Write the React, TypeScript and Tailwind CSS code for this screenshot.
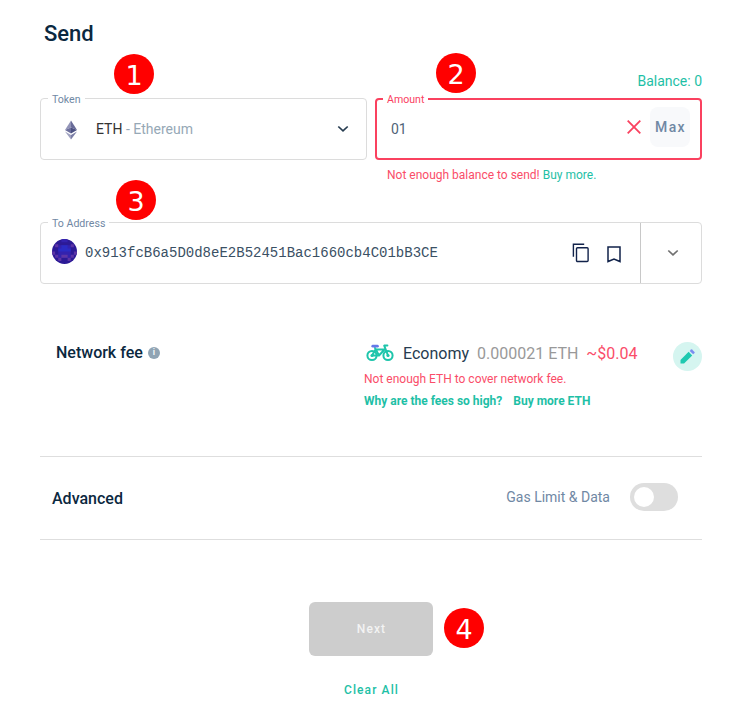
import React from "react";

function StepBadge({ n, className }: { n: number; className: string }) {
  return (
    <span
      className={`absolute flex h-10 w-10 items-center justify-center rounded-full bg-[#ff0000] pt-[3px] font-['DejaVu_Sans',sans-serif] text-[27px] leading-none text-white ${className}`}
    >
      {n}
    </span>
  );
}

function FieldLabel({ children, className = "text-[#7088a4]" }: { children: React.ReactNode; className?: string }) {
  return (
    <span className={`absolute left-[7px] -top-1.5 bg-white px-1 text-[10.6px] leading-[14px] whitespace-nowrap ${className}`}>
      {children}
    </span>
  );
}

function EthLogo() {
  return (
    <svg width="14" height="20" viewBox="0 0 14 20" className="mt-px shrink-0">
      <path d="M7 .5 1 10l6-2.6z" fill="#9294b8" />
      <path d="M7 .5 13 10 7 7.4z" fill="#686b98" />
      <path d="M1 10l6-2.6v6.2z" fill="#6c6f9c" />
      <path d="M13 10 7 7.4v6.2z" fill="#4c5182" />
      <path d="M1 11.6l6 3.5v4.4z" fill="#9fa1c0" />
      <path d="M13 11.6l-6 3.5v4.4z" fill="#7b7ea6" />
    </svg>
  );
}

function Identicon() {
  return (
    <svg width="25" height="25" viewBox="0 0 24 24" className="shrink-0">
      <defs>
        <clipPath id="avatar">
          <circle cx="12" cy="12" r="12" />
        </clipPath>
      </defs>
      <g clipPath="url(#avatar)">
        <path fill="#2c1a96" d="M0 0h24v24H0z" />
        <path fill="#3322ae" d="M9 0h6v3H9zM6 6h12v12H6z" />
        <path fill="#2b2bc4" d="M9 6h6v6H9zM6 9h12v3H6z" />
        <path
          fill="#5d35a6"
          d="M3 5h3v3H3zM18 5h3v3h-3zM0 12h3v3H0zM21 12h3v3h-3zM3 15h3v3H3zM18 15h3v3h-3zM9 15h6v3H9zM6 18h3v3H6zM15 18h3v3h-3z"
        />
      </g>
    </svg>
  );
}

function BikeIcon() {
  return (
    <svg width="28" height="18" viewBox="0 0 28 18" fill="none" className="shrink-0">
      <g stroke="#1ec5ab" strokeWidth="2" strokeLinecap="round" strokeLinejoin="round">
        <circle cx="6" cy="11.5" r="4.6" />
        <circle cx="22" cy="11.5" r="4.6" />
        <path d="M6 11.5 9.5 5.5h9M9 4l4 7.5H6M13 11.5l5.5-6M22 11.5 18.2 1.6h3.2" />
      </g>
      <circle cx="6" cy="11.5" r="1.6" fill="#1ec5ab" />
      <circle cx="22" cy="11.5" r="1.6" fill="#1ec5ab" />
      <path d="M6.8 2.2h4.6" stroke="#6578e8" strokeWidth="2.8" strokeLinecap="round" />
    </svg>
  );
}

function Chevron({ color }: { color: string }) {
  return (
    <svg width="12" height="8" viewBox="0 0 12 8" fill="none" className="shrink-0">
      <path d="m1.3 1.5 4.7 4.4 4.7-4.4" stroke={color} strokeWidth="1.7" />
    </svg>
  );
}

export default function App() {
  return (
    <main className="relative h-[719px] w-[730px] overflow-hidden bg-white pr-7 pl-10 font-['Roboto',sans-serif] text-[#0b2840]">
      <header className="flex h-[98px] justify-between">
        <h1 className="pt-5 pl-1 text-[22px] leading-7 font-medium">Send</h1>
        <span className="pt-[71px] text-[14px] leading-5 text-[#1ec0a6]">Balance: 0</span>
      </header>

      <section className="flex h-[124px] items-start gap-2">
        <div className="relative flex h-[62px] w-[327px] items-center rounded border border-[#dcdcdc] pr-[17px] pl-[23px]">
          <FieldLabel>Token</FieldLabel>
          <EthLogo />
          <span className="mt-px ml-[18px] flex-1 text-[14px] text-[#96a8b6]">
            <span className="text-[#333]">ETH</span> - Ethereum
          </span>
          <Chevron color="#263c50" />
        </div>
        <div className="w-[327px]">
          <div className="relative flex h-[62px] items-center rounded border-2 border-[#fa415f] pr-[10px] pl-[14px]">
            <FieldLabel className="-mt-px -ml-px text-[#fa415f]">Amount</FieldLabel>
            <span className="flex-1 text-[14px] text-[#506477]">01</span>
            <svg width="14" height="14" viewBox="0 0 14 14" className="mr-[9px] -mt-1">
              <path d="m.7.7 12.6 12.6M13.3.7.7 13.3" stroke="#fa415f" strokeWidth="1.8" />
            </svg>
            <button className="-mt-1 h-10 w-10 rounded-lg bg-[#f8f9fb] pl-px text-[14px] font-medium tracking-[1.4px] text-[#7088a4]">
              Max
            </button>
          </div>
          <p className="pt-[7px] pl-3 text-[12px] leading-4 text-[#fa4d69]">
            Not enough balance to send! <a className="text-[#1ec0a6]">Buy more.</a>
          </p>
        </div>
      </section>

      <section className="relative flex h-[62px] rounded border border-[#dcdcdc]">
        <FieldLabel>To Address</FieldLabel>
        <div className="flex flex-1 items-center border-r border-[#c8c8c8] pr-[19px] pl-[11px]">
          <span className="-mt-[3px]"><Identicon /></span>
          <span className="ml-2 flex-1 font-['Liberation_Mono',monospace] text-[14px] text-[#3a5064]">
            0x913fcB6a5D0d8eE2B52451Bac1660cb4C01bB3CE
          </span>
          <svg width="18" height="20" viewBox="0 0 18 20" fill="none" stroke="#11224a" strokeWidth="1.4" className="-mt-px">
            <path d="M1.4 13.7V1.2h10.8" />
            <rect x="4.5" y="4.7" width="11.6" height="13.8" rx="1" />
          </svg>
          <svg width="14" height="17" viewBox="0 0 14 17" fill="none" stroke="#11224a" strokeWidth="1.5" className="mt-[3px] ml-[17px]">
            <path d="M1 1h12v14.5L7 13l-6 2.5z" />
          </svg>
        </div>
        <div className="flex w-[60px] items-center justify-center pl-1">
          <Chevron color="#707070" />
        </div>
      </section>

      <section className="flex h-[172px] pt-[57px] pl-4">
        <div className="flex h-6 w-[308px] items-center gap-[5px]">
          <h2 className="text-[16px] font-medium">Network fee</h2>
          <span className="flex h-3 w-3 items-center justify-center rounded-full bg-[#90a4b4] text-[9px] font-medium text-white">i</span>
        </div>
        <div className="w-[308px]">
          <div className="flex h-6 items-center text-[16px] whitespace-nowrap">
            <span className="ml-[2px]"><BikeIcon /></span>
            <span className="mt-0.5 ml-[9px] text-[#263c50]">Economy</span>
            <span className="mt-0.5 ml-2 text-[#999]">0.000021 ETH</span>
            <span className="mt-0.5 ml-2 text-[#fa4d69]">~$0.04</span>
          </div>
          <p className="mt-1.5 text-[12px] leading-4 text-[#fa4d69]">Not enough ETH to cover network fee.</p>
          <div className="mt-1.5 flex gap-[11px] text-[12px] leading-4 font-bold text-[#1ec0a6]">
            <a>Why are the fees so high?</a>
            <a>Buy more ETH</a>
          </div>
        </div>
        <button className="mt-[1px] ml-auto flex h-[29px] w-[29px] shrink-0 items-center justify-center rounded-full bg-[#d5f5f0]">
          <svg width="15" height="15" viewBox="0 0 16 16" className="-mt-px -ml-px">
            <path d="M.5 15.5v-3.8L9.2 3l3.8 3.8-8.7 8.7z" fill="#1ec9b0" />
            <path d="m10.3 2 1.5-1.5q.5-.4 1 0l2.7 2.7q.4.5 0 1L14 5.7z" fill="#7a8df0" />
          </svg>
        </button>
      </section>

      <section className="flex h-[84px] items-center border-y border-[#dedede] pr-6 pl-3">
        <h2 className="flex-1 pt-0.5 text-[16px] font-medium">Advanced</h2>
        <span className="mr-5 -mt-0.5 text-[14px] text-[#7088a4]">Gas Limit &amp; Data</span>
        <span className="-mt-0.5 flex h-7 w-12 items-center rounded-full bg-[#dedede] pl-1">
          <span className="h-5 w-5 rounded-full bg-white" />
        </span>
      </section>

      <footer className="flex flex-col items-center pt-[62px]">
        <button className="h-[54px] w-[124px] rounded-md bg-[#cdcdcd] pl-px text-[12px] font-medium tracking-[1.1px] text-[#f3f3f3]">Next</button>
        <button className="mt-[26px] pl-px text-[12px] leading-4 font-medium tracking-[1.1px] text-[#1ec0a6]">Clear All</button>
      </footer>

      <StepBadge n={1} className="top-[54px] left-[114px]" />
      <StepBadge n={2} className="top-[53px] left-[436px]" />
      <StepBadge n={3} className="top-[180px] left-[116px]" />
      <StepBadge n={4} className="top-[608px] left-[444px]" />
    </main>
  );
}
